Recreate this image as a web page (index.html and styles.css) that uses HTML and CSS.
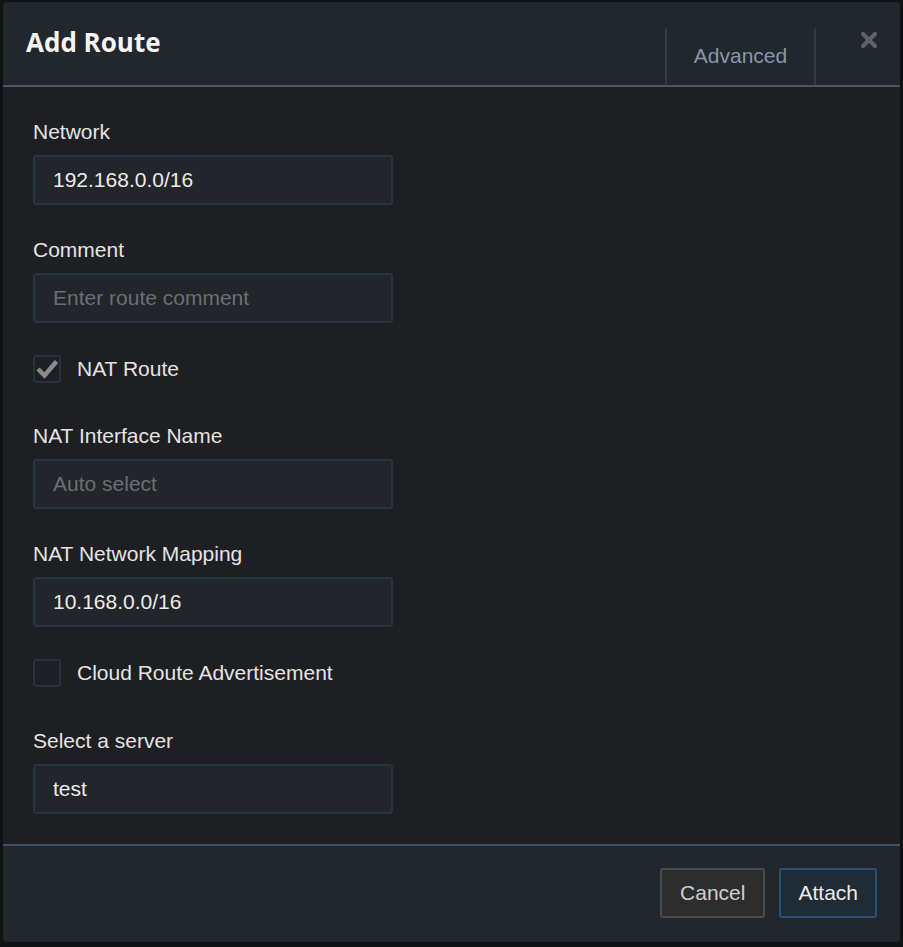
FILE: index.html
```html
<!DOCTYPE html>
<html lang="en">
<head>
    <meta charset="UTF-8">
    <meta name="viewport" content="width=device-width, initial-scale=1.0">
    <title>Add Route</title>
    <link rel="stylesheet" href="styles.css">
</head>
<body>
    <div class="modal">
        <div class="modal-header">
            <h2>Add Route</h2>
            <div class="tab">Advanced</div>
            <button class="close" aria-label="Close">
                <svg width="18" height="18" viewBox="0 0 18 18">
                    <path d="M3 3 L15 15 M15 3 L3 15" stroke="#5d6169" stroke-width="4.2" stroke-linecap="round"/>
                </svg>
            </button>
        </div>

        <div class="modal-body">
            <div class="field">
                <label>Network</label>
                <input type="text" value="192.168.0.0/16">
            </div>
            <div class="field">
                <label>Comment</label>
                <input type="text" placeholder="Enter route comment">
            </div>
            <div class="check-row">
                <span class="checkbox checked">
                    <svg width="24" height="24" viewBox="0 0 24 24">
                        <path d="M3 12 L9.5 18.5 L21.5 4.5" fill="none" stroke="#8b8b8b" stroke-width="4.5"/>
                    </svg>
                </span>
                <span>NAT Route</span>
            </div>
            <div class="field">
                <label>NAT Interface Name</label>
                <input type="text" placeholder="Auto select">
            </div>
            <div class="field">
                <label>NAT Network Mapping</label>
                <input type="text" value="10.168.0.0/16">
            </div>
            <div class="check-row last">
                <span class="checkbox"></span>
                <span>Cloud Route Advertisement</span>
            </div>
            <div class="field">
                <label>Select a server</label>
                <input type="text" value="test">
            </div>
        </div>

        <div class="modal-footer">
            <button class="btn cancel">Cancel</button>
            <button class="btn attach">Attach</button>
        </div>
    </div>
</body>
</html>
```

FILE: styles.css
```css
body {
    margin: 0;
    padding: 0;
    background-color: #101113;
    font-family: "Liberation Sans", Arial, sans-serif;
}
.modal {
    width: 897px;
    height: 940px;
    margin: 2px 0 0 3px;
    background: #1e1f22;
    border-radius: 4px;
    overflow: hidden;
    display: flex;
    flex-direction: column;
}
.modal-header {
    height: 83px;
    flex-shrink: 0;
    display: flex;
    background: #22262d;
    border-bottom: 2px solid #46586a;
    padding-left: 23px;
}
.modal-header h2 {
    margin: 0;
    padding-top: 23px;
    flex: 1;
    font-family: "Open Sans", sans-serif;
    font-weight: 700;
    font-size: 26px;
    line-height: 34px;
    color: #f4f4f4;
}
.tab {
    align-self: flex-end;
    height: 57px;
    box-sizing: border-box;
    width: 151px;
    border-left: 2px solid #343a42;
    border-right: 2px solid #343a42;
    text-align: center;
    padding-top: 16px;
    font-size: 21px;
    color: #8898aa;
}
.close {
    background: none;
    border: none;
    padding: 0;
    margin: 29px 22px 0 44px;
    width: 18px;
    height: 18px;
    align-self: flex-start;
    cursor: pointer;
}
.close svg {
    display: block;
}
.modal-body {
    flex: 1;
    min-height: 0;
    padding: 33px 30px 0;
}
.field {
    margin-bottom: 33px;
}
.field:last-child {
    margin-bottom: 0;
}
.field label {
    display: block;
    font-size: 21px;
    line-height: 24px;
    color: #e4e4e4;
    margin-bottom: 11px;
}
.field input {
    display: block;
    box-sizing: border-box;
    width: 360px;
    height: 50px;
    padding: 0 18px;
    font-family: "Liberation Sans", Arial, sans-serif;
    font-size: 21px;
    color: #ececec;
    background: #22252a;
    border: 2px solid #26343e;
    border-radius: 3px;
    outline: none;
}
.field input::placeholder {
    color: #6c6f74;
}
.check-row {
    display: flex;
    align-items: center;
    gap: 16px;
    margin-top: -1px;
    margin-bottom: 41px;
    font-size: 21px;
    color: #e4e4e4;
}
.check-row.last {
    margin-bottom: 42px;
}
.checkbox {
    width: 28px;
    height: 28px;
    box-sizing: border-box;
    border: 2px solid #26333d;
    border-radius: 3px;
    display: flex;
    align-items: center;
    justify-content: center;
}
.modal-footer {
    height: 98px;
    flex-shrink: 0;
    box-sizing: border-box;
    display: flex;
    justify-content: flex-end;
    gap: 14px;
    padding: 22px 23px 0 0;
    background: #22262d;
    border-top: 2px solid #3e5061;
}
.btn {
    height: 50px;
    font-family: "Liberation Sans", Arial, sans-serif;
    font-size: 21px;
    border-radius: 3px;
    cursor: pointer;
}
.cancel {
    padding: 0 18px;
    background: #2d2d2e;
    border: 2px solid #4a4b4d;
    color: #cfcfcf;
}
.attach {
    padding: 0 17px;
    background: #1f2b35;
    border: 2px solid #2c5271;
    color: #ececec;
}
```
